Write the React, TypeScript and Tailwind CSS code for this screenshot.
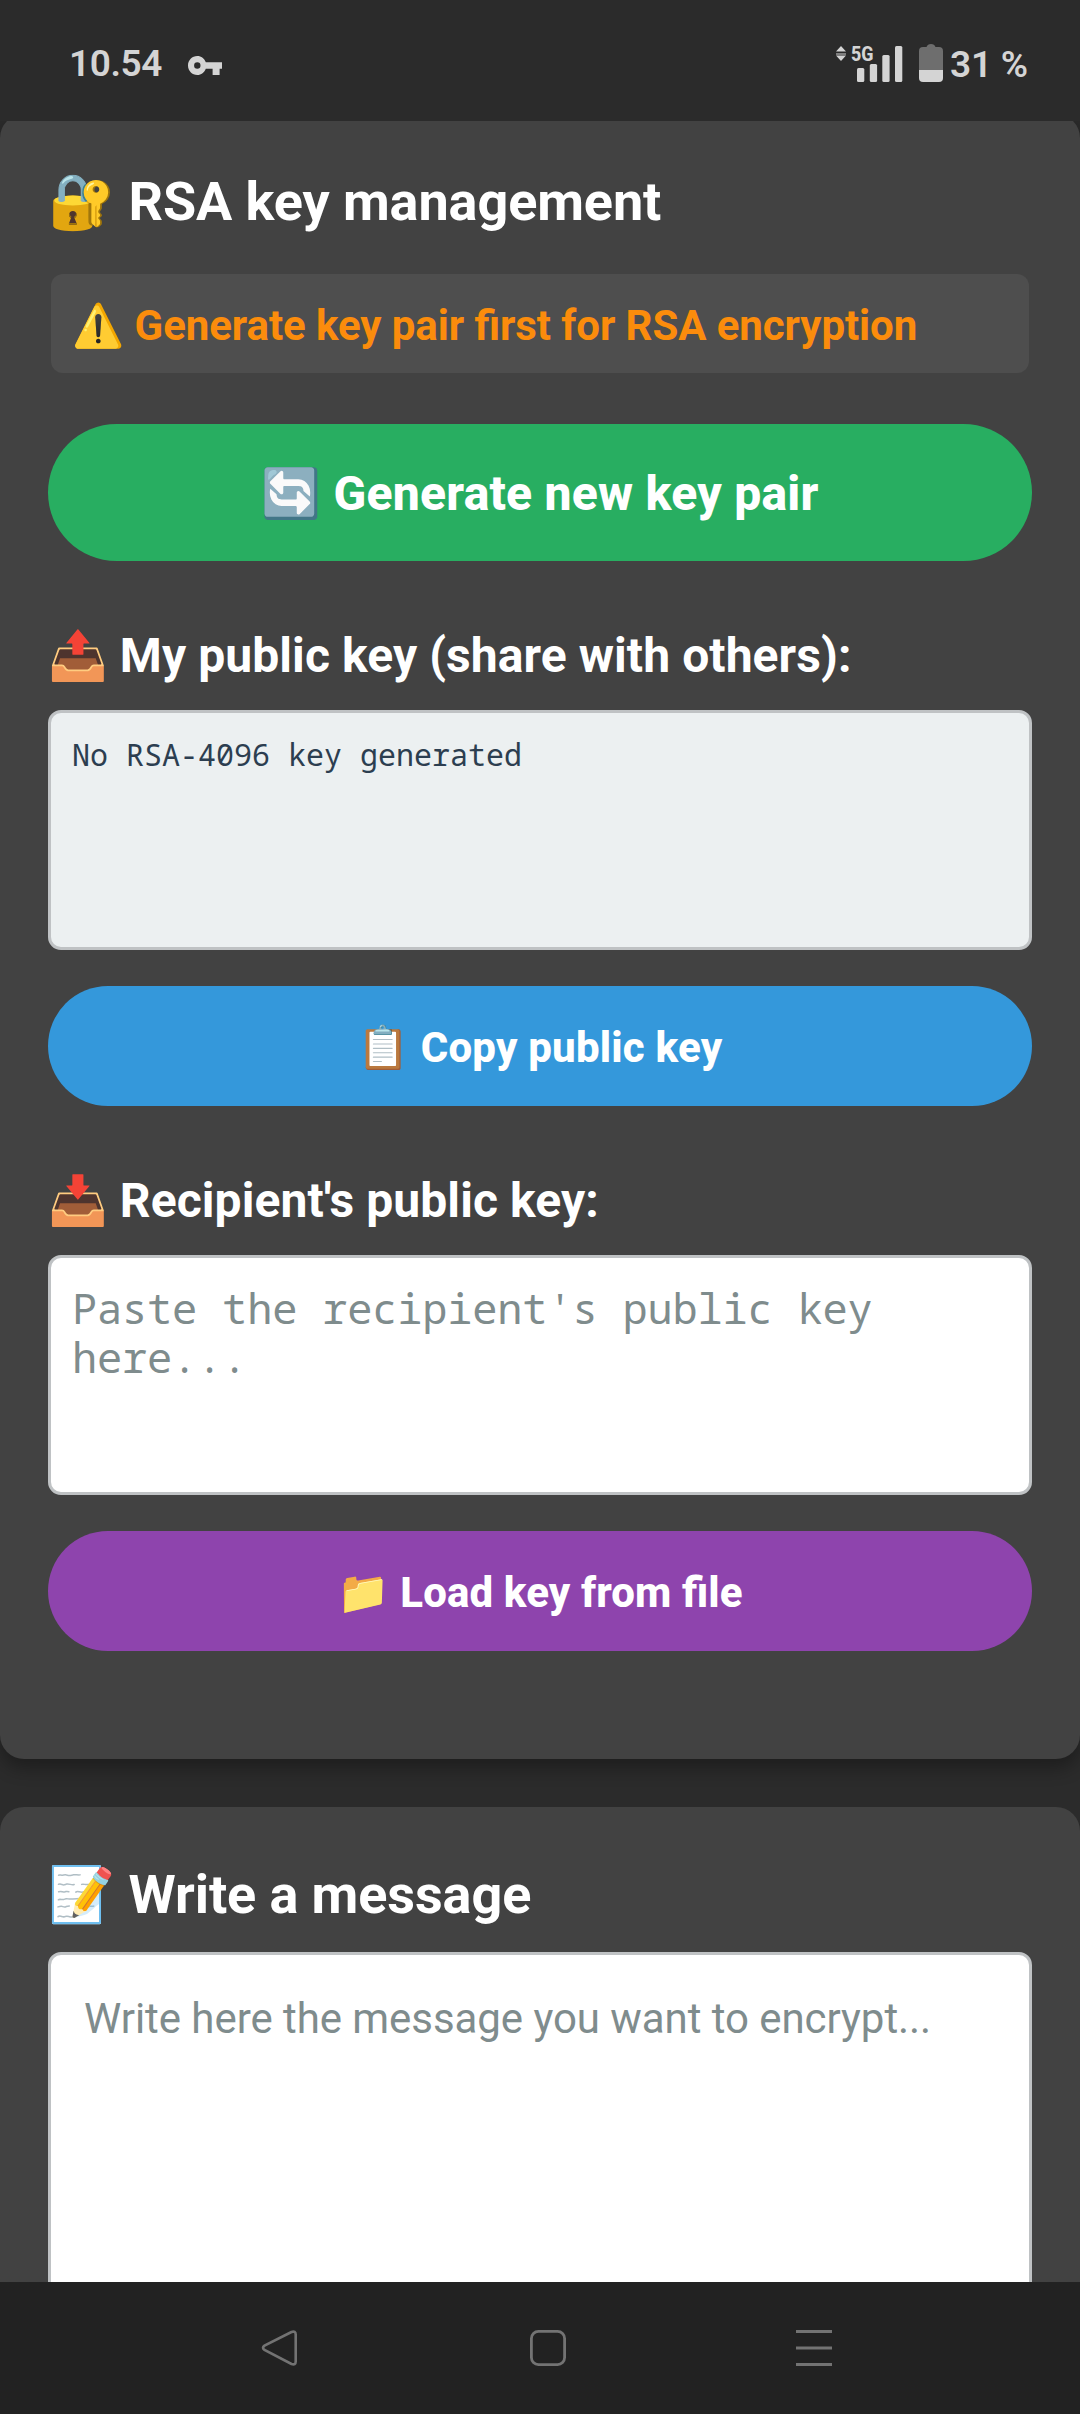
import React from "react";

const ink = "#d4d4d4";

function StatusBar() {
  return (
    <header className="relative z-10 flex h-[121px] shrink-0 items-start justify-between bg-[#2b2b2b] pl-[69px] pr-[53px] text-[#d4d4d4]">
      <div className="flex items-start">
        <span className="mt-[42px] w-[94px] text-[37px] font-semibold leading-[44px] tracking-[-0.4px]">10.54</span>
        <svg className="ml-[25px] mt-[56px]" width="34" height="19" viewBox="0 0 34 19" fill={ink}>
          <path
            fillRule="evenodd"
            d="M9.3 0C4.1 0 0 4.200 0 9.500S4.100 19 9.300 19c4 0 7.200-2.600 8.500-6.300H24.600V19h7V12.700H34V6.300H17.800C16.500 2.600 13.300 0 9.300 0Zm0 6.300a3.200 3.200 0 1 1 0 6.400 3.200 3.200 0 0 1 0-6.400Z"
          />
        </svg>
      </div>
      <div className="flex items-start">
        <svg className="mt-[40px]" width="108" height="44" viewBox="836 40 108 44" fill={ink}>
          <path d="M841 46l5 5.500h-10zM836 53.500h10v1h-10zM841 61l5-5.500h-10z" />
          <text x="851" y="61" fontFamily="Roboto" fontWeight="800" fontSize="21" textLength="22.500" lengthAdjust="spacingAndGlyphs">
            5G
          </text>
          <rect x="857" y="68" width="7.300" height="14" rx="1.500" />
          <rect x="869.800" y="64" width="7.300" height="18" rx="1.500" />
          <rect x="882.300" y="55" width="7.300" height="27" rx="1.500" />
          <rect x="895" y="46" width="7.300" height="36" rx="1.500" />
          <path
            fill="#6e6e6e"
            d="M923 47h3.500q1-3 4.500-3t4.500 3h3.500a4 4 0 0 1 4 4v19h-24V51a4 4 0 0 1 4-4z"
          />
          <path d="M919 70h24v8a4 4 0 0 1-4 4h-16a4 4 0 0 1-4-4z" />
        </svg>
        <span className="ml-[6px] mt-[43px] w-[77px] whitespace-nowrap text-[37px] font-semibold leading-[44px] tracking-[-0.2px]">31 %</span>
      </div>
    </header>
  );
}

function Button({ className, children }: { className: string; children: React.ReactNode }) {
  return (
    <button className={"flex w-full shrink-0 items-center justify-center rounded-full pt-[2px] font-extrabold text-white [font-feature-settings:'liga'_1] " + className}>
      {children}
    </button>
  );
}

const card = "flex w-full shrink-0 flex-col bg-[#424242] px-[48px]";
const title = "mt-[56px] h-[64px] whitespace-nowrap text-[54px] font-bold leading-[64px] tracking-[-0.1px] text-white";
const label = "mt-[67px] h-[56px] whitespace-nowrap text-[48px] font-bold leading-[56px] tracking-[0.08px] text-white";
const mono =
  "mt-[26px] block h-[240px] w-full shrink-0 resize-none rounded-[13px] border-[3px] border-[#bfc2c4] px-[21px] font-['Droid_Sans_Mono','Noto_Sans_Mono','DejaVu_Sans_Mono',monospace] outline-none";

export default function App() {
  return (
    <div className="flex h-[2414px] w-[1080px] flex-col overflow-hidden bg-[#2b2b2b] font-['Roboto','Noto_Color_Emoji',sans-serif]">
      <StatusBar />
      <main className="flex h-[2161px] shrink-0 flex-col gap-[48px] overflow-hidden">
        <section className={card + " -mt-[7px] h-[1645px] rounded-[24px] shadow-[0_9px_18px_rgba(0,0,0,0.32)]"}>
          <h1 className={title}>🔐 RSA key management</h1>
          <p className="mx-[3px] mt-[40px] flex h-[99px] shrink-0 items-center whitespace-nowrap rounded-[12px] bg-[#4e4e4e] pl-[21px] pt-[3px] text-[42px] font-bold tracking-[-0.07px] text-[#fb8c0c] [font-feature-settings:'liga'_1]">
            ⚠️ Generate key pair first for RSA encryption
          </p>
          <Button className="mt-[51px] h-[137px] bg-[#28ae61] text-[48px] tracking-[0.24px]">🔄 Generate new key pair</Button>
          <h2 className={label}>📤 My public key (share with others):</h2>
          <textarea
            readOnly
            className={mono + " bg-[#ecf0f1] pt-[24px] text-[30px] leading-[36px] text-[#2c3e50]"}
            defaultValue="No RSA-4096 key generated"
          />
          <Button className="mt-[36px] h-[120px] bg-[#3498db] text-[42px] tracking-[0.2px]">📋 Copy public key</Button>
          <h2 className={label}>📥 Recipient's public key:</h2>
          <textarea
            className={mono + " bg-white pt-[25px] text-[42px] leading-[49px] tracking-[-0.18px] placeholder:text-[#7f8c8d] placeholder:opacity-100"}
            placeholder="Paste the recipient's public key here..."
          />
          <Button className="mt-[36px] h-[120px] bg-[#8e44ad] text-[42px] tracking-[0.12px]">📁 Load key from file</Button>
        </section>
        <section className={card + " h-[520px] rounded-t-[24px]"}>
          <h1 className={title}>📝 Write a message</h1>
          <textarea
            className="mt-[25px] block h-[400px] w-full shrink-0 resize-none rounded-[13px] border-[3px] border-[#bfc2c4] bg-white px-[33px] pt-[39px] text-[42px] leading-[49px] tracking-[-0.06px] outline-none placeholder:text-[#7f8c8d] placeholder:opacity-100"
            placeholder="Write here the message you want to encrypt..."
          />
        </section>
      </main>
      <nav className="flex h-[132px] shrink-0 items-start bg-[#222222] pl-[261px] pt-[47px]">
        <svg width="38" height="38" viewBox="0 0 38 38" fill="none" stroke="#737373" strokeWidth="2.600">
          <path d="M30.500 3L3.500 16.600q-3 2.200 0 4.400L30.500 35Q34.700 36.500 34.700 32.500V5.500Q34.700 1.500 30.500 3Z" />
        </svg>
        <svg className="ml-[230px]" width="38" height="38" viewBox="0 0 38 38" fill="none" stroke="#737373" strokeWidth="2.800">
          <rect x="2.400" y="2.400" width="33.200" height="33.200" rx="7" />
        </svg>
        <svg className="ml-[228px]" width="38" height="38" viewBox="0 0 38 38" fill="#737373">
          <path d="M1 1h36v3H1zM1 17.500h36v3H1zM1 34h36v3H1z" />
        </svg>
      </nav>
    </div>
  );
}
